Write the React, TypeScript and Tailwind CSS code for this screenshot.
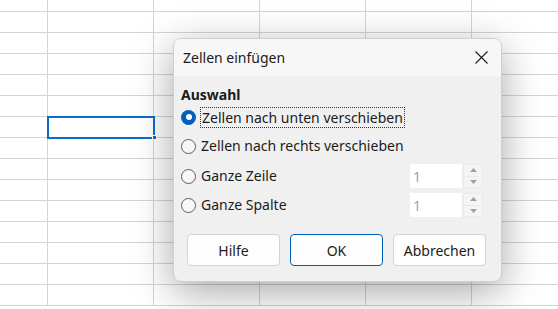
const cols = [48, 106, 106, 106, 106, 106, 106];
const rows = [12, 21, 21, 21, 21, 21, 21, 21, 21, 21, 21, 21, 21, 21, 21];

function Radio({ checked }: { checked?: boolean }) {
  return checked ? (
    <span className="flex h-[15px] w-[15px] items-center justify-center rounded-full bg-[#005fb8]">
      <span className="h-[6px] w-[6px] rounded-full bg-white" />
    </span>
  ) : (
    <span className="h-[15px] w-[15px] rounded-full border border-[#5c5c5c] bg-[#f7f7f7]" />
  );
}

function Spin() {
  return (
    <div className="flex h-[24px] items-stretch">
      <div className="flex w-[52px] items-center bg-white pl-[3px] text-[#a3a3a3]">1</div>
      <div className="ml-px flex w-[20px] flex-col gap-px bg-[#ebebeb] p-px">
        <div className="flex flex-1 items-center justify-center bg-[#f5f5f5]">
          <svg width="7" height="4" viewBox="0 0 7 4">
            <path d="M0 4 L3.5 0 L7 4Z" fill="#a0a0a0" />
          </svg>
        </div>
        <div className="flex flex-1 items-center justify-center bg-[#f5f5f5]">
          <svg width="7" height="4" viewBox="0 0 7 4">
            <path d="M0 0 L3.5 4 L7 0Z" fill="#a0a0a0" />
          </svg>
        </div>
      </div>
    </div>
  );
}

export default function App() {
  return (
    <div className="relative h-[309px] w-[558px] overflow-hidden bg-white font-['Noto_Sans',sans-serif] text-[14px] text-[#1b1b1b]">
      <div
        className="grid"
        style={{ gridTemplateColumns: cols.map((c) => c + "px").join(" "), gridTemplateRows: rows.map((r) => r + "px").join(" ") }}
      >
        {rows.map((_, r) =>
          cols.map((_, c) => <div key={r + "-" + c} className="border-b border-r border-[#d4d4d4]" />)
        )}
      </div>

      {/* selected cell */}
      <div className="absolute left-[47px] top-[116px] h-[23px] w-[108px] border-2 border-[#0b6ccb]" />
      <div className="absolute left-[152px] top-[135px] h-[5px] w-[5px] border border-white bg-[#0b6ccb]" />

      {/* dialog */}
      <div className="absolute left-[173px] top-[38px] flex h-[244px] w-[329px] flex-col overflow-hidden rounded-[8px] border border-[#cfcfcf] bg-[#f0f0f0] shadow-[0_10px_40px_rgba(0,0,0,0.35)]">
        <div className="flex h-[37px] items-center justify-between bg-[#f7f7f7] pl-[9px] pr-[13px]">
          <span className="-mt-px text-[14px]">Zellen einfügen</span>
          <svg width="13" height="13" viewBox="0 0 13 13" className="-mt-px">
            <path d="M0.5 0.5 L12.5 12.5 M12.5 0.5 L0.5 12.5" stroke="#1b1b1b" strokeWidth="1.1" />
          </svg>
        </div>
        <div className="flex flex-col px-[7px] pt-[9px]">
          <div className="h-[20px] font-bold leading-[20px]">Auswahl</div>
          <div className="flex h-[24px] items-center gap-[4px]">
            <Radio checked />
            <span className="border border-dotted border-[#333] px-px leading-[19px]">Zellen nach unten verschieben</span>
          </div>
          <div className="mt-[5px] flex h-[24px] items-center gap-[5px]">
            <Radio />
            <span className="-mt-px">Zellen nach rechts verschieben</span>
          </div>
          <div className="mt-[6px] flex h-[24px] items-center justify-between pr-[11px]">
            <div className="flex items-center gap-[5px]">
              <Radio />
              <span className="-mt-px">Ganze Zeile</span>
            </div>
            <Spin />
          </div>
          <div className="mt-[5px] flex h-[24px] items-center justify-between pr-[11px]">
            <div className="flex items-center gap-[5px]">
              <Radio />
              <span className="-mt-px">Ganze Spalte</span>
            </div>
            <Spin />
          </div>
        </div>
        <div className="mt-[17px] flex gap-[10px] pl-[13px]">
          <button className="h-[32px] w-[93px] rounded-[4px] border border-[#d3d3d3] bg-[#fdfdfd]">Hilfe</button>
          <button className="h-[32px] w-[93px] rounded-[4px] border border-[#005fb8] bg-[#fdfdfd]">OK</button>
          <button className="h-[32px] w-[93px] rounded-[4px] border border-[#d3d3d3] bg-[#fdfdfd]">Abbrechen</button>
        </div>
      </div>
    </div>
  );
}
